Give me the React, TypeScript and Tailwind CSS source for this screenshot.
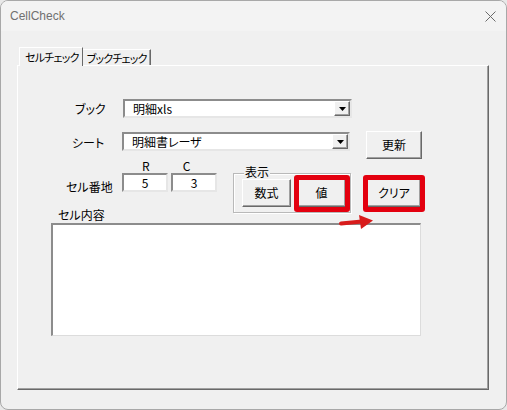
import React from "react";

const raised =
  "border border-t-white border-l-white border-r-[#696969] border-b-[#696969] shadow-[inset_-1px_-1px_0_#a0a0a0]";
const sunken =
  "border-2 border-t-[#8c8c8c] border-l-[#8c8c8c] border-r-[#e6e6e6] border-b-[#e6e6e6] bg-white";

function Combo({ value, width }: { value: string; width: string }) {
  return (
    <div className={`${sunken} ${width} h-[19px] flex items-center justify-between`}>
      <span className="pl-[8px] text-[12px] leading-[14px] text-black whitespace-nowrap">{value}</span>
      <div className={`${raised} bg-[#f0f0f0] w-[16px] h-[15px] flex items-center justify-center`}>
        <svg width="7" height="4" viewBox="0 0 7 4">
          <polygon points="0,0 7,0 3.5,4" fill="#000" />
        </svg>
      </div>
    </div>
  );
}

function Btn({ label, width }: { label: string; width: string }) {
  return (
    <div
      className={`${raised} ${width} h-[28px] bg-[#f0f0f0] flex items-center justify-center text-[12px] leading-[14px] text-black whitespace-nowrap`}
    >
      {label}
    </div>
  );
}

export default function App() {
  return (
    <div className="w-[507px] h-[410px] bg-[#e8e8e8] font-['Noto_Sans_CJK_JP',sans-serif] [font-feature-settings:'palt']">
      <div className="relative w-[507px] h-[410px] rounded-[8px] border border-[#a8a8a8] bg-[#f0f0f0] overflow-hidden flex flex-col">
        {/* title bar */}
        <div className="h-[30px] bg-[#f3f3f3] flex items-center justify-between pl-[9px] pr-[10px]">
          <span className="font-['Liberation_Sans',sans-serif] text-[12px] text-[#707070] [font-feature-settings:normal]">
            CellCheck
          </span>
          <svg width="11" height="11" viewBox="0 0 11 11">
            <path d="M0.5 0.5 L10.5 10.5 M10.5 0.5 L0.5 10.5" stroke="#6a6a6a" strokeWidth="1" />
          </svg>
        </div>

        {/* body */}
        <div className="flex-1 pt-[16px] pl-[16px]">
          {/* tabs */}
          <div className="flex items-end h-[18px] ml-[2px]">
            <div className="relative z-10 -mb-px h-[19px] bg-[#f0f0f0] border-t border-l border-t-white border-l-white border-r border-r-[#696969] pl-[5px] pr-[3px] flex items-center text-[11px] leading-[14px] text-black whitespace-nowrap tracking-[-0.8px]">
              セルチェック
            </div>
            <div className="h-[16px] bg-[#f0f0f0] border-t border-t-white border-r border-r-[#696969] shadow-[inset_-1px_0_0_#a0a0a0] pl-[4px] pr-[3px] flex items-center text-[11px] leading-[14px] text-black whitespace-nowrap tracking-[-0.8px]">
              ブックチェック
            </div>
          </div>

          {/* panel */}
          <div className="w-[472px] h-[325px] border border-t-white border-l-white border-r-[#696969] border-b-[#696969] shadow-[inset_-1px_-1px_0_#a0a0a0] text-[12px] leading-[14px] text-black">
            {/* row A */}
            <div className="mt-[33px] flex items-center h-[19px]">
              <div className="w-[105px] pl-[57px] whitespace-nowrap">ブック</div>
              <Combo value="明細xls" width="w-[229px]" />
            </div>

            {/* row B */}
            <div className="mt-[13px] flex items-start">
              <div className="w-[104px] pl-[54px] h-[23px] flex items-center whitespace-nowrap">シート</div>
              <div className="mt-[1px]">
                <Combo value="明細書レーザ" width="w-[228px]" />
              </div>
              <div className="ml-[16px]">
                <Btn label="更新" width="w-[56px]" />
              </div>
            </div>

            {/* row C */}
            <div className="flex items-start">
              <div className="w-[199px]">
                <div className="flex h-[14px]">
                  <span className="ml-[124px]">R</span>
                  <span className="ml-[33px]">C</span>
                </div>
                <div className="flex items-start h-[19px]">
                  <div className="w-[104px] pl-[48px] pt-[7px] whitespace-nowrap">セル番地</div>
                  <div className={`${sunken} w-[46px] h-[19px] flex items-center justify-center`}>5</div>
                  <div className={`${sunken} ml-[3px] w-[46px] h-[19px] flex items-center justify-center`}>3</div>
                </div>
                <div className="mt-[16px] pl-[40px] whitespace-nowrap">セル内容</div>
              </div>

              {/* frame */}
              <div className="relative ml-[16px] mt-[14px] w-[118px] h-[40px] border border-[#b9b9b9] shadow-[inset_1px_1px_0_#ffffff,1px_1px_0_#ffffff]">
                <span className="absolute -top-[9px] left-[10px] px-[1px] bg-[#f0f0f0]">表示</span>
                <div className="flex pl-[8px] pt-[5px]">
                  <Btn label="数式" width="w-[49px]" />
                  <div className="relative ml-[6px]">
                    <Btn label="値" width="w-[49px]" />
                    <div className="absolute -left-[3px] -right-[4px] -top-[4px] -bottom-[5px] border-[5px] border-[#e3000f] rounded-[3px]" />
                  </div>
                </div>
              </div>

              {/* clear */}
              <div className="relative ml-[16px] mt-[20px]">
                <Btn label="クリア" width="w-[54px]" />
                <div className="absolute -left-[4px] -right-[4px] -top-[4px] -bottom-[5px] border-[5px] border-[#e3000f] rounded-[3px]" />
              </div>
            </div>

            {/* text area */}
            <div className="mt-[1px] ml-[33px] w-[370px] h-[113px] bg-white border-t-2 border-l-2 border-t-[#8c8c8c] border-l-[#8c8c8c] border-r border-b border-r-[#dcdcdc] border-b-[#dcdcdc]" />
          </div>
        </div>

        {/* red arrow overlay */}
        <svg
          className="absolute left-[337px] top-[211px]"
          width="40"
          height="20"
          viewBox="0 0 40 20"
        >
          <path d="M3 11.5 L24 9.5" stroke="#d81b1b" strokeWidth="4" strokeLinecap="round" />
          <polygon points="21,3 35,8.5 23,17" fill="#d81b1b" />
        </svg>
      </div>
    </div>
  );
}
